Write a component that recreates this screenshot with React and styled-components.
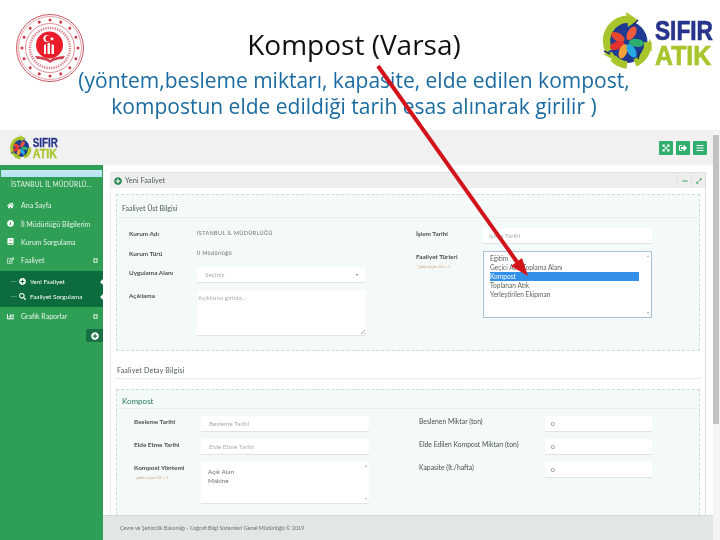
import React from "react";
import styled, { createGlobalStyle } from "styled-components";
import {
  FaHome, FaInfoCircle, FaBook, FaRegEdit, FaPlusCircle, FaSearch, FaChartBar,
  FaExpandArrowsAlt, FaSignOutAlt, FaBars, FaMinus, FaExpandAlt, FaPlusSquare,
} from "react-icons/fa";

const GlobalStyle = createGlobalStyle`
  html, body { margin: 0; padding: 0; background: #fff; }
  body { font-family: "Open Sans", "Liberation Sans", sans-serif; }
  * { box-sizing: border-box; }
`;

const Page = styled.div`
  position: relative;
  width: 720px;
  height: 540px;
  overflow: hidden;
  background: #fff;
`;

// slide header
const SlideHead = styled.header`
  height: 130px;
  display: grid;
  grid-template-columns: 1fr;
  justify-items: center;
  filter: blur(0.25px);
`;
const HeadCell = styled.div`
  grid-area: 1 / 1;
  justify-self: ${(p) => p.$side || "center"};
  margin: ${(p) => p.$margin || "0"};
`;
const Title = styled.h1`
  margin: 26px 0 0 0;
  font-size: 28px;
  line-height: 36px;
  font-weight: 400;
  color: #111;
  text-align: center;
  white-space: nowrap;
`;
const Sub = styled.p`
  margin: 5px 0 0 0;
  font-size: 21px;
  line-height: 26px;
  color: #1b6ba1;
  text-align: center;
  white-space: nowrap;
`;

// screenshot part of the slide
const Shot = styled.section`
  height: 410px;
  display: flex;
  filter: blur(0.45px);
`;
const Main = styled.div`
  flex: 1;
  min-width: 0;
  display: flex;
  flex-direction: column;
`;
const ScrollTrack = styled.div`
  width: 7px;
  padding: 5px 1px 116px 0;
  background: #f4f4f4;
`;
const ScrollThumb = styled.div`
  height: 100%;
  background: #c2c2c2;
`;
const TopBar = styled.div`
  height: 35px;
  flex: none;
  display: flex;
  align-items: center;
  justify-content: space-between;
  padding: 0 6px 0 8px;
  background: #f1f1f1;
`;
const TopButtons = styled.div`
  display: flex;
  gap: 3px;
`;
const TopButton = styled.div`
  width: 14px;
  height: 14px;
  display: flex;
  align-items: center;
  justify-content: center;
  border-radius: 1px;
  background: #2fae6e;
  color: #fff;
  font-size: 8px;
`;
const Body = styled.div`
  flex: 1;
  min-height: 0;
  display: flex;
`;

// sidebar
const Sidebar = styled.nav`
  width: 103px;
  flex: none;
  padding-top: 5px;
  background: #2f9f55;
  color: #e6f4ea;
  font-family: Lato, "Open Sans", sans-serif;
  font-size: 7px;
`;
const SearchBar = styled.div`
  height: 7px;
  margin: 0 1px;
  background: linear-gradient(#c6eaf6, #b4e4f2);
`;
const Province = styled.div`
  margin: 0 0 5px;
  height: 14px;
  line-height: 14px;
  text-align: center;
  letter-spacing: 0.2px;
  font-size: 6.6px;
`;
const MenuItem = styled.div`
  height: ${(p) => (p.$sub ? "15px" : "18.4px")};
  display: flex;
  align-items: center;
  gap: ${(p) => (p.$sub ? "4px" : "7px")};
  padding-left: ${(p) => (p.$sub ? "19px" : "7px")};
  padding-right: 5px;
  position: relative;
  font-size: ${(p) => (p.$sub ? "6.4px" : "7px")};
  color: ${(p) => (p.$sub ? "#fff" : "#e6f4ea")};
  svg { flex: none; font-size: 7px; color: #fff; }
  ${(p) => p.$sub && `
    &::before { content: ""; position: absolute; left: 11px; top: 7px; width: 6px; height: 1px; background: #3d9a68; }
    &::after { content: ""; position: absolute; right: 0; top: 5px; border: 3px solid transparent; border-right: 3px solid #fff; border-left: 0; }
  `}
`;
const MenuEnd = styled.span`
  margin-left: auto;
  display: flex;
  svg { font-size: 5px; color: #cfe8d7; }
`;
const SubMenu = styled.div`
  margin: 1px 0 0;
  padding: 3px 0 3.5px;
  background: #0d6c3e;
`;
const Toggle = styled.div`
  width: 17px;
  height: 13px;
  margin: 4px 0 0 auto;
  display: flex;
  align-items: center;
  justify-content: center;
  border-radius: 2px 0 0 2px;
  background: #1a6f43;
  svg { color: #fff; font-size: 8px; }
`;

// content
const Content = styled.main`
  flex: 1;
  min-width: 0;
  display: flex;
  flex-direction: column;
  background: #fff;
`;
const Scroller = styled.div`
  flex: 1;
  min-height: 0;
  overflow: hidden;
  padding: 7px 7px 0 7px;
`;
const Panel = styled.div`
  border-right: 1px solid #ddd;
  border-left: 1px solid #eee;
  height: 100%;
`;
const PanelHead = styled.div`
  height: 16px;
  display: flex;
  align-items: center;
  gap: 3px;
  padding-left: 3px;
  background: #eee;
  border-top: 1px solid #ddd;
  font-family: Lato, "Open Sans", sans-serif;
  font-size: 7.4px;
  color: #55625a;
  svg { color: #23894e; font-size: 8px; }
`;
const PanelTools = styled.div`
  margin-left: auto;
  display: flex;
  height: 100%;
`;
const PanelTool = styled.div`
  width: 14px;
  display: flex;
  align-items: center;
  justify-content: center;
  border-left: 1px solid #e2e2e2;
  svg { font-size: 6px; color: ${(p) => p.$color}; }
`;
const PanelBody = styled.div`
  padding: 6px 5px 0 5px;
`;
const Box = styled.div`
  height: ${(p) => p.$height}px;
  border: 1px dashed #cfdcd8;
  border-bottom-width: ${(p) => (p.$open ? 0 : "1px")};
  background: #f4faf9;
  font-family: Lato, "Open Sans", sans-serif;
`;
const BoxHead = styled.div`
  height: ${(p) => (p.$green ? "19px" : "23px")};
  padding: ${(p) => (p.$green ? "6px" : "8px")} 0 0 5px;
  border-bottom: 1px solid #e9f0ee;
  font-size: ${(p) => (p.$green ? "8px" : "7px")};
  line-height: 10px;
  color: ${(p) => (p.$green ? "#2c7a58" : "#4d5a54")};
`;
const BoxGrid = styled.div`
  display: grid;
  grid-template-columns: ${(p) => p.$columns};
  padding: ${(p) => p.$padding};
`;
const Column = styled.div`
  display: flex;
  flex-direction: column;
`;
const Field = styled.div`
  display: grid;
  grid-template-columns: ${(p) => p.$label}px ${(p) => p.$control}px;
  margin-bottom: ${(p) => p.$gap ?? 4}px;
`;
const Label = styled.div`
  padding-top: 1px;
  font-size: ${(p) => (p.$light ? "6.8px" : "6.4px")};
  font-weight: ${(p) => (p.$light ? 400 : 700)};
  line-height: 9px;
  color: #49524e;
  white-space: nowrap;
`;
const Hint = styled.div`
  margin-top: 3px;
  font-size: 3.6px;
  font-weight: 400;
  line-height: 5px;
  color: #c9a27a;
`;
const StaticValue = styled.div`
  height: 15px;
  line-height: 10px;
  font-size: 5.6px;
  letter-spacing: 0.3px;
  color: #6c7671;
  white-space: nowrap;
`;
const Control = styled.div`
  height: ${(p) => p.$height || 16}px;
  position: relative;
  display: flex;
  align-items: ${(p) => (p.$area ? "flex-start" : "center")};
  justify-content: space-between;
  padding: ${(p) => p.$padding || "0 8px"};
  background: #fff;
  border-bottom: 1px solid #dfe3e2;
  font-size: 6.4px;
  line-height: 9px;
  color: ${(p) => p.$color || "#a9afad"};
  white-space: pre-line;
`;
const Caret = styled.span`
  width: 0;
  height: 0;
  border: 1.5px solid transparent;
  border-top: 2px solid #666;
  border-bottom: 0;
`;
const Grip = styled.span`
  position: absolute;
  right: 1px;
  bottom: 1px;
  width: 4px;
  height: 4px;
  background: linear-gradient(135deg, transparent 50%, #aaa 50%, #aaa 62%, transparent 62%, transparent 78%, #aaa 78%);
`;
const ListBox = styled.div`
  height: 67px;
  position: relative;
  padding: 2px 12px 0 6px;
  background: #fff;
  border: 1px solid #a9c2d4;
`;
const ListOption = styled.div`
  height: 9px;
  line-height: 9px;
  font-size: 6.6px;
  color: ${(p) => (p.$on ? "#fff" : "#5d6663")};
  background: ${(p) => (p.$on ? "#3390e8" : "transparent")};
  white-space: nowrap;
`;
const ScrollArrow = styled.span`
  position: absolute;
  right: 2px;
  ${(p) => (p.$up ? "top: 3px;" : "bottom: 3px;")}
  border: 1.5px solid transparent;
  ${(p) => (p.$up ? "border-bottom: 2px solid #aaa; border-top: 0;" : "border-top: 2px solid #aaa; border-bottom: 0;")}
`;
const SectionTitle = styled.div`
  height: 28px;
  margin: 0 0 10px;
  padding: 14px 0 0 1px;
  border-bottom: 1px dotted #d8dcda;
  font-family: Lato, "Open Sans", sans-serif;
  font-size: 7px;
  line-height: 10px;
  letter-spacing: 0.2px;
  color: #4d5a54;
`;
const Footer = styled.footer`
  height: 25px;
  flex: none;
  display: flex;
  align-items: center;
  padding-left: 17px;
  background: #e2e7e5;
  border-top: 1px solid #cfd6d3;
  font-family: Lato, "Open Sans", sans-serif;
  font-size: 5.35px;
  color: #69736e;
`;

const Arrow = styled.svg`
  position: absolute;
  left: 0;
  top: 0;
  pointer-events: none;
`;

// emblem of the ministry, red seal
function Seal() {
  const stars = Array.from({ length: 16 }, (_, i) => (i * 360) / 16);
  return (
    <svg width="70" height="72" viewBox="0 0 70 72">
      <g fill="none" stroke="#c8414f">
        <circle cx="35" cy="36" r="33.5" strokeWidth="0.9" />
        <circle cx="35" cy="36" r="31.5" strokeWidth="0.5" />
        <circle cx="35" cy="36" r="24.5" strokeWidth="0.6" />
        <circle cx="35" cy="36" r="20" strokeWidth="2.6" strokeDasharray="1.3 1.1" opacity="0.65" />
      </g>
      {stars.map((a) => (
        <circle key={a} cx="35" cy="8" r="1.5" fill="#cf3a48" transform={`rotate(${a} 35 36)`} />
      ))}
      <circle cx="34.5" cy="33" r="13.5" fill="#ea1c2a" />
      <circle cx="32" cy="26.5" r="3.6" fill="#fff" />
      <circle cx="33.4" cy="26.5" r="3" fill="#ea1c2a" />
      <path d="M37 24.5l.6 1.5 1.6.1-1.2 1 .4 1.6-1.4-.9-1.4.9.4-1.6-1.2-1 1.6-.1z" fill="#fff" />
      <path d="M29 42v-9l2-1v10zM32.5 42V31h2.5v11zM36.500 42V32l2.500 1v9z" fill="#fff" />
      <path d="M20 44c5 0 11 1 15 4 4-3 10-4 15-4l-2 3c-5 0-9 1-13 4-4-3-8-4-13-4z" fill="#d3404d" />
    </svg>
  );
}

// recycle ring with the flower and the wordmark, real text in the svg
function ZeroWasteLogo({ width, height }) {
  const petals = [
    ["#e8452f", 300],
    ["#e2312f", 250],
    ["#f3a23a", 200],
    ["#27a9e1", 150],
    ["#2db06d", 95],
    ["#ef5a3c", 30],
  ];
  return (
    <svg width={width} height={height} viewBox="0 0 114 60">
      <circle cx="25.500" cy="30" r="21" fill="#1f3a93" />
      <g fill="none" stroke="#a8c62c" strokeWidth="7.500">
        <path d="M8 39A22 22 0 0 1 28 7" />
        <path d="M47 30A22 22 0 0 1 34 51" />
        <path d="M12 46A22 22 0 0 0 26 53" />
      </g>
      <path d="M25 0l12 8-10 7z" fill="#a8c62c" />
      <path d="M44 36l5 -9 2 12z" fill="#a8c62c" />
      <path d="M2 42l9 -2 9 12z" fill="#a8c62c" />
      <path d="M32 13l5-5M3 39l6 3M37 47l2-8" stroke="#1d2d5c" strokeWidth="1.500" />
      {petals.map(([color, angle]) => (
        <ellipse key={angle} cx="25.500" cy="20" rx="4" ry="7.500" fill={color}
          transform={`rotate(${angle} 25.500 30)`} />
      ))}
      <text transform="translate(54 28) scale(.81 1)" fontFamily="Liberation Sans, sans-serif" fontWeight="700"
        fontSize="28" fill="#27348b" stroke="#27348b" strokeWidth="0.7">SIFIR</text>
      <text transform="translate(54 53) scale(.89 1)" fontFamily="Liberation Sans, sans-serif" fontWeight="700"
        fontSize="28" fill="#a8c62c" stroke="#a8c62c" strokeWidth="0.7">ATIK</text>
    </svg>
  );
}

const options = ["Eğitim", "Geçici Atık Toplama Alanı", "Kompost", "Toplanan Atık", "Yerleştirilen Ekipman"];

export default function App() {
  return (
    <Page>
      <GlobalStyle />
      <SlideHead>
        <HeadCell $side="start" $margin="12px 0 0 15px"><Seal /></HeadCell>
        <HeadCell $side="end" $margin="12px 5px 0 0"><ZeroWasteLogo width={114} height={60} /></HeadCell>
        <HeadCell $margin="0 12px 0 0">
          <Title>Kompost (Varsa)</Title>
          <Sub>
            (yöntem,besleme miktarı, kapasite, elde edilen kompost,<br />
            kompostun elde edildiği tarih esas alınarak girilir )
          </Sub>
        </HeadCell>
      </SlideHead>

      <Shot>
        <Main>
          <TopBar>
            <ZeroWasteLogo width={52} height={26} />
            <TopButtons>
              <TopButton><FaExpandArrowsAlt /></TopButton>
              <TopButton><FaSignOutAlt /></TopButton>
              <TopButton><FaBars /></TopButton>
            </TopButtons>
          </TopBar>
          <Body>
            <Sidebar>
              <SearchBar />
              <Province>İSTANBUL İL MÜDÜRLÜ...</Province>
              <MenuItem><FaHome />Ana Sayfa</MenuItem>
              <MenuItem><FaInfoCircle />İl Müdürlüğü Bilgilerim</MenuItem>
              <MenuItem><FaBook />Kurum Sorgulama</MenuItem>
              <MenuItem><FaRegEdit />Faaliyet<MenuEnd><FaPlusSquare /></MenuEnd></MenuItem>
              <SubMenu>
                <MenuItem $sub><FaPlusCircle />Yeni Faaliyet</MenuItem>
                <MenuItem $sub><FaSearch />Faaliyet Sorgulama</MenuItem>
              </SubMenu>
              <MenuItem><FaChartBar />Grafik Raporlar<MenuEnd><FaPlusSquare /></MenuEnd></MenuItem>
              <Toggle><FaPlusCircle /></Toggle>
            </Sidebar>

            <Content>
              <Scroller>
                <Panel>
                  <PanelHead>
                    <FaPlusCircle />Yeni Faaliyet
                    <PanelTools>
                      <PanelTool $color="#2f9f55"><FaMinus /></PanelTool>
                      <PanelTool $color="#2f9f55"><FaExpandAlt /></PanelTool>
                    </PanelTools>
                  </PanelHead>
                  <PanelBody>
                    <Box $height={157}>
                      <BoxHead>Faaliyet Üst Bilgisi</BoxHead>
                      <BoxGrid $columns="287px 1fr" $padding="10px 0 0 12px">
                        <Column>
                          <Field $label={68} $control={169} $gap={5}>
                            <Label>Kurum Adı</Label>
                            <StaticValue>İSTANBUL İL MÜDÜRLÜĞÜ</StaticValue>
                          </Field>
                          <Field $label={68} $control={169} $gap={4}>
                            <Label>Kurum Türü</Label>
                            <StaticValue>İl Müdürlüğü</StaticValue>
                          </Field>
                          <Field $label={68} $control={169} $gap={7}>
                            <Label>Uygulama Alanı</Label>
                            <Control>Seçiniz<Caret /></Control>
                          </Field>
                          <Field $label={68} $control={169}>
                            <Label>Açıklama</Label>
                            <Control $area $height={46} $padding="3px 0 0 1px">Açıklama giriniz...<Grip /></Control>
                          </Field>
                        </Column>
                        <Column>
                          <Field $label={67} $control={169} $gap={7}>
                            <Label>İşlem Tarihi</Label>
                            <Control $padding="0 6px">İşlem Tarihi</Control>
                          </Field>
                          <Field $label={67} $control={169}>
                            <Label>Faaliyet Türleri<Hint>* çoklu seçim: Ctrl + 1</Hint></Label>
                            <ListBox>
                              {options.map((o) => (
                                <ListOption key={o} $on={o === "Kompost"}>{o}</ListOption>
                              ))}
                              <ScrollArrow $up />
                              <ScrollArrow />
                            </ListBox>
                          </Field>
                        </Column>
                      </BoxGrid>
                    </Box>
                    <SectionTitle>Faaliyet Detay Bilgisi</SectionTitle>
                    <Box $height={126} $open>
                      <BoxHead $green>Kompost</BoxHead>
                      <BoxGrid $columns="285px 1fr" $padding="7px 0 0 17px">
                        <Column>
                          <Field $label={67} $control={168} $gap={7}>
                            <Label>Besleme Tarihi</Label>
                            <Control>Besleme Tarihi</Control>
                          </Field>
                          <Field $label={67} $control={168} $gap={7}>
                            <Label>Elde Etme Tarihi</Label>
                            <Control>Elde Etme Tarihi</Control>
                          </Field>
                          <Field $label={67} $control={168}>
                            <Label>Kompost Yöntemi<Hint>* çoklu seçim: Ctrl + 1</Hint></Label>
                            <Control $area $height={42} $padding="5px 0 0 7px" $color="#6c7671">
                              {"Açık Alan\nMakine"}
                              <ScrollArrow $up />
                              <ScrollArrow />
                            </Control>
                          </Field>
                        </Column>
                        <Column>
                          <Field $label={126} $control={107} $gap={7}>
                            <Label $light>Beslenen Miktar (ton)</Label>
                            <Control $padding="0 6px" $color="#6c7671">0</Control>
                          </Field>
                          <Field $label={126} $control={107} $gap={7}>
                            <Label $light>Elde Edilen Kompost Miktarı (ton)</Label>
                            <Control $padding="0 6px" $color="#6c7671">0</Control>
                          </Field>
                          <Field $label={126} $control={107}>
                            <Label $light>Kapasite (lt./hafta)</Label>
                            <Control $padding="0 6px" $color="#6c7671">0</Control>
                          </Field>
                        </Column>
                      </BoxGrid>
                    </Box>
                  </PanelBody>
                </Panel>
              </Scroller>
              <Footer>Çevre ve Şehircilik Bakanlığı - Coğrafi Bilgi Sistemleri Genel Müdürlüğü © 2019</Footer>
            </Content>
          </Body>
        </Main>
        <ScrollTrack><ScrollThumb /></ScrollTrack>
      </Shot>

      <Arrow width="720" height="540" viewBox="0 0 720 540">
        <path d="M378 66L517 262" stroke="#d3131a" strokeWidth="4" fill="none" />
        <path d="M528 276L511 266L522 258z" fill="#d3131a" />
      </Arrow>
    </Page>
  );
}
